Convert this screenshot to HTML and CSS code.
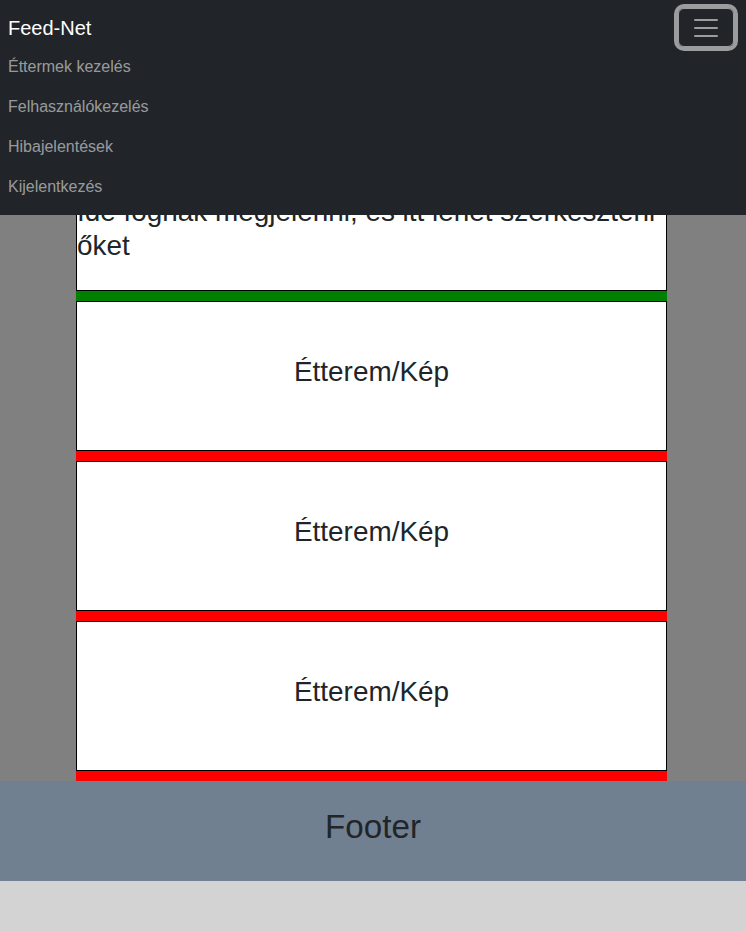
FILE: index.html
```html
<!DOCTYPE html>
<html lang="hu">
<head>
<meta charset="utf-8">
<title>Feed-Net</title>
<link rel="stylesheet" href="styles.css">
</head>
<body>
<nav class="navbar">
  <div class="navbar-row">
    <a class="brand" href="#">Feed-Net</a>
    <button class="toggler" type="button" aria-label="Menü">
      <svg class="toggler-icon" viewBox="0 0 30 30" width="30" height="30">
        <path d="M4 7h22M4 15h22M4 23h22" stroke="rgba(255,255,255,0.55)" stroke-width="2" stroke-linecap="round" fill="none"/>
      </svg>
    </button>
  </div>
  <ul class="nav-list">
    <li><a class="nav-link" href="#">Éttermek kezelés</a></li>
    <li><a class="nav-link" href="#">Felhasználókezelés</a></li>
    <li><a class="nav-link" href="#">Hibajelentések</a></li>
    <li><a class="nav-link" href="#">Kijelentkezés</a></li>
  </ul>
</nav>

<main class="main">
  <div class="column">
    <div class="card card-intro">
      <h2 class="card-title">Éttermek<br>Ide fognak megjelenni, és itt lehet szerkeszteni őket</h2>
    </div>
    <div class="status status-green"></div>

    <div class="card card-center">
      <h2 class="card-title">Étterem/Kép</h2>
    </div>
    <div class="status status-red"></div>

    <div class="card card-center">
      <h2 class="card-title">Étterem/Kép</h2>
    </div>
    <div class="status status-red"></div>

    <div class="card card-center">
      <h2 class="card-title">Étterem/Kép</h2>
    </div>
    <div class="status status-red"></div>
  </div>
</main>

<footer class="footer">
  <h1 class="footer-title">Footer</h1>
</footer>
</body>
</html>
```

FILE: styles.css
```css
* {
  box-sizing: border-box;
}

html, body {
  margin: 0;
  padding: 0;
}

body {
  background: #d3d3d3;
  font-family: "Liberation Sans", Arial, sans-serif;
  font-size: 16px;
  line-height: 1.5;
  color: #212529;
}

/* Navbar */
.navbar {
  position: fixed;
  top: 0;
  left: 0;
  right: 0;
  z-index: 10;
  background: #212529;
  padding: 8px 12px 8px 8px;
}

.navbar-row {
  display: flex;
  align-items: center;
  justify-content: space-between;
  height: 39px;
}

.brand {
  display: block;
  padding: 5px 0;
  font-size: 20px;
  line-height: 30px;
  color: #fff;
  text-decoration: none;
}

.toggler {
  display: flex;
  align-items: center;
  justify-content: center;
  width: 56px;
  height: 39px;
  padding: 4px 12px;
  background: transparent;
  border: 1px solid rgba(255, 255, 255, 0.55);
  border-radius: 6px;
  box-shadow: 0 0 0 4px rgba(255, 255, 255, 0.55);
}

.toggler-icon {
  display: block;
}

.nav-list {
  list-style: none;
  margin: 0;
  padding: 0;
  display: flex;
  flex-direction: column;
}

.nav-link {
  display: block;
  padding: 8px 0;
  line-height: 24px;
  font-size: 16px;
  color: rgba(255, 255, 255, 0.55);
  text-decoration: none;
}

/* Main */
.main {
  background: #808080;
  padding-top: 141px;
}

.column {
  margin-left: 76px;
  width: 591px;
}

.card {
  height: 150px;
  background: #fff;
  border: 1px solid #000;
}

.card-intro {
  display: flex;
  flex-direction: column;
  justify-content: center;
}

.card-center {
  display: flex;
  flex-direction: column;
  justify-content: center;
  align-items: center;
  text-align: center;
}

.card-title {
  margin: 0 0 8px 0;
  font-size: 27.9px;
  font-weight: 500;
  line-height: 1.2;
}

.card-intro .card-title {
  text-align: left;
}

.status {
  height: 10px;
}

.status-green {
  background: #008000;
}

.status-red {
  background: #ff0000;
}

/* Footer */
.footer {
  height: 100px;
  background: #708090;
  display: flex;
  flex-direction: column;
  justify-content: center;
  align-items: center;
}

.footer-title {
  margin: 0 0 8px 0;
  font-size: 33.2px;
  font-weight: 500;
  line-height: 1.2;
}
```
